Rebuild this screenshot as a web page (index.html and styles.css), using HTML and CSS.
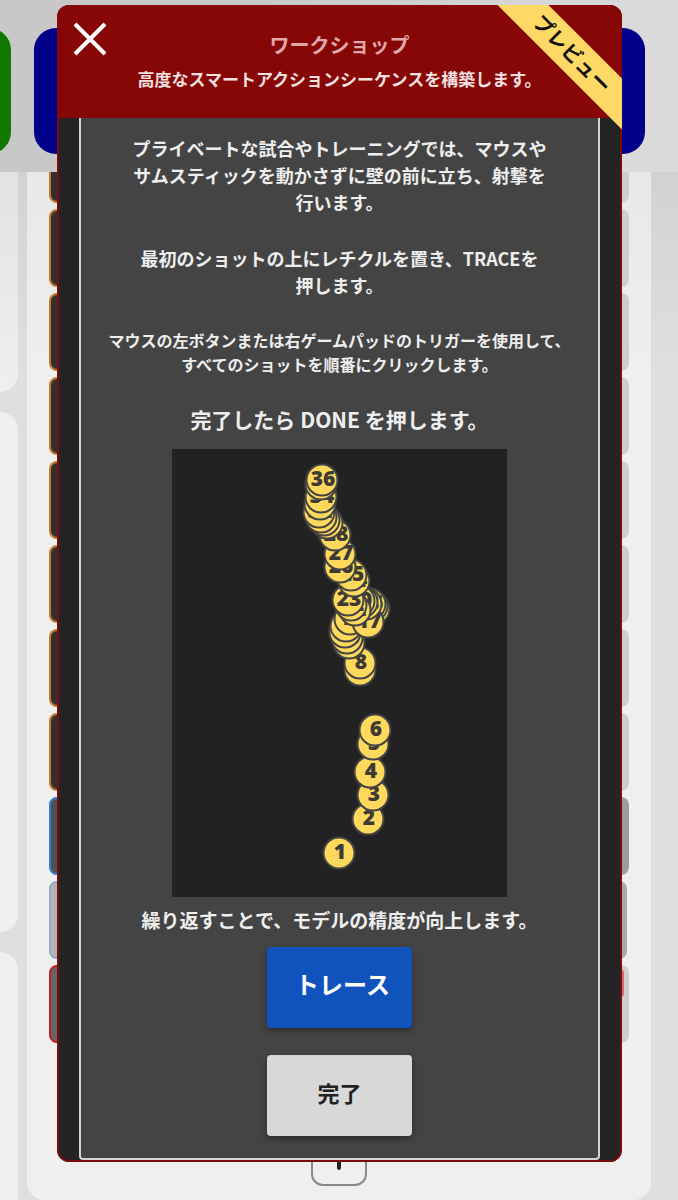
FILE: index.html
```html
<!DOCTYPE html>
<html lang="ja">
<head>
  <meta charset="UTF-8" />
  <meta name="viewport" content="width=device-width, initial-scale=1.0" />
  <title>ワークショップ</title>
  <link rel="stylesheet" href="styles.css">
</head>
<body>
  <div class="app">
    <div class="topbar">
      <div class="tab tab-green"></div>
      <div class="tab tab-blue"></div>
    </div>
    <div class="columns">
      <div class="side">
        <div class="side-card side-first"></div>
        <div class="side-card side-middle"></div>
        <div class="side-card side-last"></div>
      </div>
      <div class="panel">
        <div class="row row-cut"><span></span></div>
        <div class="row"><span></span></div>
        <div class="row"><span></span></div>
        <div class="row"><span></span></div>
        <div class="row"><span></span></div>
        <div class="row"><span></span></div>
        <div class="row"><span></span></div>
        <div class="row"><span></span></div>
        <div class="row row-blue"><span></span></div>
        <div class="row row-light"><span></span></div>
        <div class="row row-red"><span></span></div>
        <button class="add" type="button" aria-label="追加">
          <svg width="24" height="24" viewBox="0 0 24 24"><path d="M12 2v20M2 12h20" stroke="#222" stroke-width="4" stroke-linecap="round"/></svg>
        </button>
      </div>
    </div>
  </div>

  <div class="modal" role="dialog" aria-labelledby="title">
    <div class="modal-header">
      <button class="close" type="button" aria-label="閉じる">
        <svg width="34" height="34" viewBox="0 0 34 34"><path d="M2 2L32 32M32 2L2 32" stroke="#fff" stroke-width="4"/></svg>
      </button>
      <h1 id="title">ワークショップ</h1>
      <p class="subtitle">高度なスマートアクションシーケンスを構築します。</p>
    </div>
    <div class="ribbon">プレビュー</div>

    <div class="modal-body">
      <div class="content">
        <div class="steps">
          <p>プライベートな試合やトレーニングでは、マウスや<br>サムスティックを動かさずに壁の前に立ち、射撃を<br>行います。</p>
          <p>最初のショットの上にレチクルを置き、TRACEを<br>押します。</p>
          <p class="small">マウスの左ボタンまたは右ゲームパッドのトリガーを使用して、<br>すべてのショットを順番にクリックします。</p>
          <p class="large">完了したら DONE を押します。</p>
        </div>
        <svg class="pattern" id="pattern" viewBox="0 0 335 448"></svg>
        <p class="note">繰り返すことで、モデルの精度が向上します。</p>
        <div class="actions">
          <button class="btn btn-trace" type="button">トレース</button>
          <button class="btn btn-done" type="button">完了</button>
        </div>
      </div>
    </div>
  </div>

  <script>
    // shot positions, in firing order
    const shots = [
      [167, 404], [196, 370], [201, 346], [198, 323], [201, 295], [203, 281],
      [188, 221], [188, 214], [177, 194], [175, 189], [173, 183], [174, 177],
      [178, 170], [202, 160], [200, 157], [198, 155], [196, 173], [194, 155],
      [190, 153], [187, 152], [183, 161], [179, 156], [176, 151], [182, 132],
      [179, 126], [168, 118], [168, 105], [163, 86], [155, 74], [152, 71],
      [149, 68], [147, 63], [148, 55], [149, 48], [149, 35], [150, 31]
    ];
    const ns = 'http://www.w3.org/2000/svg';
    const pattern = document.getElementById('pattern');

    shots.forEach(([x, y], i) => {
      const circle = document.createElementNS(ns, 'circle');
      circle.setAttribute('cx', x);
      circle.setAttribute('cy', y);
      circle.setAttribute('r', 15.5);
      const label = document.createElementNS(ns, 'text');
      label.setAttribute('x', x + 1);
      label.setAttribute('y', y + 6);
      label.textContent = i + 1;
      pattern.append(circle, label);
    });
  </script>
</body>
</html>
```
FILE: styles.css
```css
* {
  margin: 0;
  padding: 0;
  box-sizing: border-box;
}

body {
  position: relative;
  min-height: 100vh;
  font-family: "Noto Sans CJK JP", sans-serif;
  font-weight: 700;
  background: #dfdfdf;
}

button {
  font: inherit;
  border: none;
  cursor: pointer;
}

.app {
  height: 100vh;
  min-height: 1200px;
  display: flex;
  flex-direction: column;
  overflow: hidden;
}

.topbar {
  height: 172px;
  flex: none;
  display: flex;
  gap: 23px;
  padding: 28px 33px 18px 0;
  background: linear-gradient(100deg, #c8c8c8 30%, #dadada 90%);
}

.tab {
  border-radius: 22px;
}

.tab-green {
  width: 60px;
  margin-left: -49px;
  background: #127800;
}

.tab-blue {
  flex: 1;
  background: #00008b;
}

.columns {
  flex: 1;
  display: flex;
  gap: 9px;
  padding-right: 27px;
  background: linear-gradient(#d2d2d2, #dfdfdf 200px);
}

.side {
  width: 18px;
  display: flex;
  flex-direction: column;
  gap: 20px;
}

.side-card {
  background: #efefef;
  border-radius: 0 18px 18px 0;
}

.side-first {
  height: 220px;
  border-top-right-radius: 0;
  background: linear-gradient(#e2e2e2, #efefef);
}

.side-middle {
  height: 520px;
}

.side-last {
  flex: 1;
  border-bottom-right-radius: 0;
}

.panel {
  flex: 1;
  display: flex;
  flex-direction: column;
  gap: 6px;
  padding: 0 22px;
  background: linear-gradient(#e8e8e8, #efefef 200px);
  border-radius: 0 0 18px 18px;
}

.row {
  height: 78px;
  flex: none;
  display: flex;
  border-radius: 8px;
  background: #cecece;
}

.row span {
  width: 50%;
  border: 2px solid #c8772c;
  border-radius: 8px;
  background: #303030;
}

.row-cut,
.row-cut span {
  border-top: none;
  border-radius: 0 0 8px 8px;
}

.row-cut {
  height: 31px;
}

.row-blue {
  background: #9c9c9c;
}

.row-blue span {
  border-color: #2f80cf;
  background: #505050;
}

.row-light {
  margin-right: 2px;
  background: #a8a8a8;
}

.row-light span {
  border-color: #8fb0d0;
  background: #b5b5b5;
}

.row-red span {
  border-color: #c01f25;
  background: #666;
}

.row-red::after {
  content: "";
  flex: 1;
  height: 28px;
  margin: 4px 5px 0 0;
  border-radius: 4px;
  background: #d66a75;
}

.add {
  width: 56px;
  height: 56px;
  margin: 81px auto 0;
  display: grid;
  place-items: center;
  border: 2px solid #888;
  border-radius: 12px;
  background: #efefef;
}

/* dialog over the page */
.modal {
  position: absolute;
  top: 5px;
  left: 57px;
  right: 56px;
  overflow: hidden;
  border-radius: 12px;
  background: #242424;
}

.modal-header {
  height: 113px;
  padding-top: 25px;
  background: #870606;
  text-align: center;
}

.modal-header h1 {
  font-size: 20px;
  line-height: 30px;
  font-weight: 700;
  color: #dfa9a9;
}

.subtitle {
  margin-top: 4px;
  font-size: 17px;
  line-height: 30px;
  color: #f3e0e0;
}

.close {
  position: absolute;
  top: 17px;
  left: 16px;
  width: 34px;
  height: 34px;
  background: none;
}

.ribbon {
  position: absolute;
  top: 31px;
  right: -50px;
  width: 200px;
  height: 36px;
  transform: rotate(45deg);
  background: #ffd966;
  color: #111;
  font-size: 20px;
  line-height: 34px;
  text-align: center;
}

.modal-body {
  padding: 0 20px;
  border: 2px solid #7a0c0e;
  border-top: none;
  border-radius: 0 0 12px 12px;
}

.content {
  display: flex;
  flex-direction: column;
  align-items: center;
  padding: 17px 0 22px;
  border: 2px solid #d4d4d4;
  border-top: none;
  border-radius: 0 0 4px 4px;
  background: #444;
  color: #eee;
  text-align: center;
}

.steps {
  display: flex;
  flex-direction: column;
  gap: 29px;
  font-size: 18px;
  line-height: 27px;
  white-space: nowrap;
}

.small {
  font-size: 16px;
  line-height: 24px;
}

.large {
  font-size: 21px;
  line-height: 28px;
}

.pattern {
  width: 335px;
  height: 448px;
  margin-top: 16px;
  background: #222;
}

.pattern circle {
  fill: #ffd95c;
  stroke: #444;
  stroke-width: 2px;
}

.pattern text {
  fill: #3d3a34;
  font-family: "Open Sans", sans-serif;
  font-size: 21px;
  font-weight: 800;
  text-anchor: middle;
}

.note {
  margin-top: 11px;
  font-size: 19px;
  line-height: 24px;
}

.actions {
  display: flex;
  flex-direction: column;
  gap: 27px;
  margin-top: 15px;
}

.btn {
  width: 145px;
  height: 81px;
  padding-bottom: 8px;
  border-radius: 4px;
  box-shadow: 0 3px 6px rgba(0, 0, 0, 0.35);
}

.btn-trace {
  padding-left: 6px;
  background: #1053bd;
  color: #fff;
  font-size: 24px;
}

.btn-done {
  background: #d8d8d8;
  color: #222;
  font-size: 22px;
}
```
